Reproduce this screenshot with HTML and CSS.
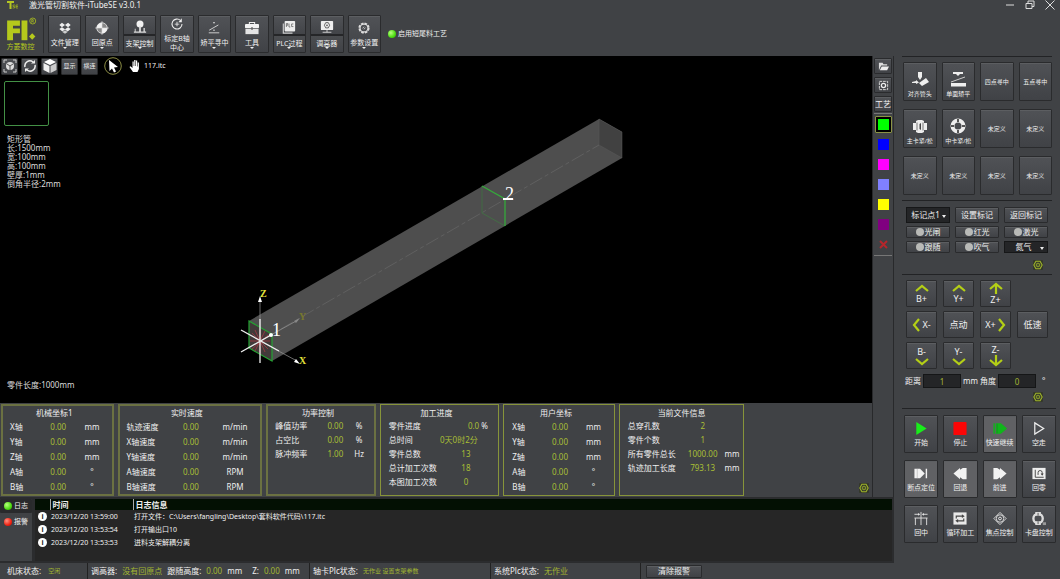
FILE: index.html
```html
<!DOCTYPE html>
<html lang="zh-CN">
<head>
<meta charset="utf-8">
<title>激光管切割软件-iTubeSE v3.0.1</title>
<link rel="stylesheet" href="styles.css">
</head>
<body>
<svg class="defs" aria-hidden="true">
  <symbol id="gear" viewBox="0 0 12 12"><path d="M3.5 1.5h5L11 6l-2.500 4.500h-5L1 6z" fill="none" stroke="currentColor" stroke-width="1.300"/><circle cx="6" cy="6" r="2.200" fill="none" stroke="currentColor"/><circle cx="6" cy="6" r=".7" fill="currentColor"/></symbol>
  <symbol id="up" viewBox="0 0 14 8"><path d="M1 7l6-5 6 5" fill="none" stroke="currentColor" stroke-width="2.200"/></symbol>
  <symbol id="down" viewBox="0 0 14 8"><path d="M1 1l6 5 6-5" fill="none" stroke="currentColor" stroke-width="2.200"/></symbol>
</svg>
<div class="app">
  <header class="header">
    <div class="titlebar">
      <svg class="app-icon" viewBox="0 0 11 10"><path d="M0 1h7v2H4.500v6h-2V3H0z" fill="#b5c722"/><path d="M8 5H6v1.500h1.500V8H5.500M11 5H9v3h2M9 6.500h2" fill="none" stroke="#9aac20" stroke-width=".8"/></svg>
      <h1 class="title">激光管切割软件-iTubeSE v3.0.1</h1>
      <div class="window-controls">
        <button aria-label="最小化"><svg viewBox="0 0 10 10"><path d="M1 5h8"/></svg></button>
        <button aria-label="还原"><svg viewBox="0 0 10 10"><path d="M1 3.500h6v5H1zM3 3.500V1h6v5.500H7"/></svg></button>
        <button aria-label="关闭"><svg viewBox="0 0 10 10"><path d="M.5.5l9 9M9.500.5l-9 9"/></svg></button>
      </div>
    </div>
    <div class="toolbar">
      <div class="brand">
        <svg viewBox="0 0 30 24"><path d="M2 4h12v5H7.500v2.500H14V16H7.500v6.500H2z" fill="#b5c91c"/><path d="M15.500 4H21v18.500h-5.500z" fill="#b5c91c"/><path d="M25.500 16l3 3-3 3-3-3z" fill="#b5c91c"/><circle cx="26" cy="4.500" r="2.800" fill="none" stroke="#b5c91c" stroke-width=".7"/><path d="M25.100 6.100V3h1.200q1 .8 0 1.600h-1.200m1 0l1 1.500" fill="none" stroke="#b5c91c" stroke-width=".6"/></svg>
        <span>方菱数控</span>
      </div>
      <nav class="tools">
        <button class="tool has-menu"><svg viewBox="0 0 16 16"><path d="M4.500 2L8 4.500 4.500 7 1.500 4.500zM11.500 2L8 4.500 11.500 7l3-2.500zM4.500 7L8 9.500 11.500 7l3 2.200L11 12 8 9.800 5 12 1.500 9.200z" fill="#eee"/><path d="M5 12.500l3-2 3 2-3 2z" fill="#ccc"/></svg><span>文件管理</span></button>
        <button class="tool has-menu"><svg viewBox="0 0 16 16"><circle cx="8" cy="8" r="6" fill="#888" stroke="#ddd"/><path d="M8 8V2A6 6 0 0 0 2 8zM8 8v6A6 6 0 0 0 14 8z" fill="#f2f2f2"/><path d="M8 0v16M0 8h16" stroke="#ddd" stroke-width=".7"/></svg><span>回原点</span></button>
        <button class="tool split has-menu"><svg viewBox="0 0 16 16"><circle cx="8" cy="4.500" r="4" fill="#f2f2f2"/><path d="M7 7h2v6H7zM1 13h14v1.500H1zM2 10h1v3H2zM12 9h1.500v4H12z" fill="#ddd"/></svg><span>支架控制</span></button>
        <button class="tool"><svg viewBox="0 0 16 16"><path d="M12 4a5.700 5.700 0 1 0 1.700 4" fill="none" stroke="#eee" stroke-width="1.200"/><path d="M13.500 1.500V6H9.500zM7.500 5.500h1V7.600h2.100v1H8.500v2.100h-1V8.600H5.400v-1h2.100z" fill="#eee"/></svg><span>标定B轴<br>中心</span></button>
        <button class="tool has-menu"><svg viewBox="0 0 16 16"><path d="M2 13.500h12M2.500 10.500L13 4.500" stroke="#ddd" fill="none"/><path d="M7 1h2L8 3.500zM7 11h2l-1-2z" fill="#eee"/></svg><span>矫平寻中</span></button>
        <button class="tool has-menu"><svg viewBox="0 0 16 16"><path d="M5 4V1.800h6V4" fill="none" stroke="#eee" stroke-width="1.200"/><rect x="0" y="3.500" width="16" height="4.500" rx="1" fill="#f2f2f2"/><path d="M.5 8.800h15V15H.5z" fill="#e4e4e4"/><path d="M7 7h2v3H7z" fill="#666"/></svg><span>工具</span></button>
        <button class="tool split has-menu"><svg viewBox="0 0 16 16"><path d="M1.500 4v11H12" fill="none" stroke="#ccc" stroke-width="1.300"/><rect x="3" y="1" width="12" height="12" rx="1" fill="#eee"/><path d="M5 8V4h1.500v2H5M8 4v4h1.500M13 4.500h-2v3h2" stroke="#555" fill="none" stroke-width=".8"/></svg><span>PLC过程</span></button>
        <button class="tool split has-menu"><svg viewBox="0 0 16 16"><rect x="1" y="1" width="14" height="10.500" rx="1" fill="#eee"/><path d="M6.500 3h3L11 6 9.500 9h-3L5 6z" fill="none" stroke="#555"/><circle cx="8" cy="6" r="1" fill="#555"/><path d="M8 11.500V14M3 14h10" stroke="#ddd"/></svg><span>调高器</span></button>
        <button class="tool has-menu"><svg viewBox="0 0 16 16"><circle cx="8" cy="8" r="5.500" fill="none" stroke="#ddd" stroke-width="1.800" stroke-dasharray="3 1.320"/><circle cx="8" cy="8" r="4.500" fill="none" stroke="#ddd" stroke-width="1.300"/><path d="M6.500 8.500L8 6.500M8 9.500l1.500-2" stroke="#ccc"/></svg><span>参数设置</span></button>
      </nav>
      <p class="process"><i class="led green"></i>启用短尾料工艺</p>
    </div>
  </header>

  <main class="workspace">
    <section class="stage">
      <div class="viewport">
        <svg class="scene" viewBox="0 56 872 347" preserveAspectRatio="xMidYMid slice" role="img" aria-label="矩形管三维视图">
          <path d="M249 321L599 119l23 13v26L272 361l-23-13z" fill="#4e4e4e"/>
          <path d="M599 119l23 13v26l-23-13z" fill="#414141" stroke="#5a5a5a" stroke-width=".5"/>
          <path d="M260 341L599 145" stroke="#6c6c6c" stroke-width=".6" stroke-dasharray="14 3 4 3"/>
          <path d="M482 186v27l23 13" fill="none" stroke="#3d7a40" stroke-width=".7"/>
          <path d="M482 186l23 13v27" fill="none" stroke="#35a83b" stroke-width="1.300"/>
          <path d="M249 321l23 13v27l-23-13z" fill="#413a3a" stroke="#24a232" stroke-width="1.200"/>
          <path d="M252 333l16 16M252 349l16-14M260 329v24M250 341h20M255 330l10 22M265 331l-10 20" stroke="#a33843" stroke-width=".8"/>
          <path d="M260 341v-39M260 341l37 20M260 341l38-21" stroke="#999" stroke-width=".7"/>
          <path d="M260 319v44M241 330l38 21M241 352l30-17" stroke="#eee" stroke-width="1.300"/>
          <path d="M258 302l2-6 2 6zM294 362l6 2-4-5z" fill="#fff"/>
          <path d="M294 321l6-3-4 5z" fill="#888"/>
          <circle cx="271" cy="335" r="2" fill="#fff"/><path d="M503 198h10v2h-10z" fill="#fff"/>
          <text x="260" y="297" class="axis">Z</text><text x="299" y="364" class="axis">X</text><text x="299" y="320" class="axis faint">Y</text>
          <text x="272" y="336" class="point">1</text><text x="505" y="200" class="point">2</text>
        </svg>
        <div class="view-tools">
          <button class="mini" aria-label="视图"><svg viewBox="0 0 14 14"><path d="M1 4V1h3M10 1h3v3M13 10v3h-3M4 13H1v-3" fill="none" stroke="#ccc"/><circle cx="7" cy="7" r="4" fill="#ddd"/><path d="M7 7v4M7 7L4 5M7 7l3-2" stroke="#555"/></svg></button>
          <button class="mini" aria-label="旋转"><svg viewBox="0 0 14 14"><path d="M2 8a5 5 0 0 1 8-5M12 6a5 5 0 0 1-8 5" fill="none" stroke="#eee" stroke-width="1.500"/><path d="M8 4.500h4V1zM6 9.500H2V13z" fill="#eee"/></svg></button>
          <button class="mini" aria-label="立体"><svg viewBox="0 0 14 14"><path d="M7 0l6 3-6 3-6-3z" fill="#fff"/><path d="M.5 4l6 3v7l-6-3z" fill="#eee"/><path d="M13.500 4l-6 3v7l6-3z" fill="#ccc"/></svg></button>
          <button class="mini">显示</button>
          <button class="mini">横连</button>
          <button class="pointer" aria-label="选择"><svg viewBox="0 0 18 18"><circle cx="9" cy="9" r="8.300" fill="none" stroke="#8c8d45"/><path d="M5 3l9 7-4 .5 2 4-2 1-2-4-2.500 2.500z" fill="#fff"/></svg></button>
          <button class="hand" aria-label="平移"><svg viewBox="0 0 12 14"><path d="M4 13L.5 8l1-.7L3.500 9V2.500h1.200V7h.5V1h1.300v6H7V1.500h1.200v6h.5V3.500h1.200V10L8.500 13z" fill="#fff"/></svg></button>
          <span>117.itc</span>
        </div>
        <div class="section-view"></div>
        <p class="dimensions">矩形管<br>长:1500mm<br>宽:100mm<br>高:100mm<br>壁厚:1mm<br>倒角半径:2mm</p>
        <p class="part-length">零件长度:1000mm</p>
      </div>
      <div class="readouts">
        <section class="readout axes thick"><h2>机械坐标1</h2><dl>
          <dt>X轴</dt><dd>0.00</dd><dd>mm</dd><dt>Y轴</dt><dd>0.00</dd><dd>mm</dd><dt>Z轴</dt><dd>0.00</dd><dd>mm</dd><dt>A轴</dt><dd>0.00</dd><dd>°</dd><dt>B轴</dt><dd>0.00</dd><dd>°</dd></dl></section>
        <section class="readout speed thick"><h2>实时速度</h2><dl>
          <dt>轨迹速度</dt><dd>0.00</dd><dd>m/min</dd><dt>X轴速度</dt><dd>0.00</dd><dd>m/min</dd><dt>Y轴速度</dt><dd>0.00</dd><dd>m/min</dd><dt>A轴速度</dt><dd>0.00</dd><dd>RPM</dd><dt>B轴速度</dt><dd>0.00</dd><dd>RPM</dd></dl></section>
        <section class="readout power thick tight"><h2>功率控制</h2><dl>
          <dt>峰值功率</dt><dd>0.00</dd><dd>%</dd><dt>占空比</dt><dd>0.00</dd><dd>%</dd><dt>脉冲频率</dt><dd>1.00</dd><dd>Hz</dd></dl></section>
        <section class="readout progress tight"><h2>加工进度</h2><dl>
          <dt>零件进度</dt><dd class="percent">0.0 <em>%</em></dd><dt>总时间</dt><dd class="wide">0天0时2分</dd><dt>零件总数</dt><dd>13</dd><dt>总计加工次数</dt><dd>18</dd><dt>本图加工次数</dt><dd>0</dd></dl></section>
        <section class="readout axes"><h2>用户坐标</h2><dl>
          <dt>X轴</dt><dd>0.00</dd><dd>mm</dd><dt>Y轴</dt><dd>0.00</dd><dd>mm</dd><dt>Z轴</dt><dd>0.00</dd><dd>mm</dd><dt>A轴</dt><dd>0.00</dd><dd>°</dd><dt>B轴</dt><dd>0.00</dd><dd>°</dd></dl></section>
        <section class="readout file tight"><h2>当前文件信息</h2><dl>
          <dt>总穿孔数</dt><dd>2</dd><dd></dd><dt>零件个数</dt><dd>1</dd><dd></dd><dt>所有零件总长</dt><dd>1000.00</dd><dd>mm</dd><dt>轨迹加工长度</dt><dd>793.13</dd><dd>mm</dd></dl></section>
        <button class="gear" aria-label="显示设置"><svg><use href="#gear"/></svg></button>
      </div>
    </section>

    <aside class="layers">
      <button class="layer-tool" aria-label="打开"><svg viewBox="0 0 12 12"><path d="M1 10V2h4l1 1.500h4V5H3.500z" fill="#ddd"/><path d="M4 6h8l-2 4H2z" fill="#eee"/></svg></button>
      <button class="layer-tool" aria-label="图层设置"><svg viewBox="0 0 12 12"><rect x="1.500" y="1.500" width="9" height="9" fill="none" stroke="#ddd" stroke-dasharray="3 1"/><circle cx="6" cy="6" r="2.300" fill="none" stroke="#eee" stroke-width="1.400"/></svg></button>
      <button class="layer-tool">工艺</button>
      <div class="swatches">
        <button class="swatch lime selected" aria-label="绿色图层"></button>
        <button class="swatch blue" aria-label="蓝色图层"></button>
        <button class="swatch magenta" aria-label="品红图层"></button>
        <button class="swatch lavender" aria-label="淡紫图层"></button>
        <button class="swatch yellow" aria-label="黄色图层"></button>
        <button class="swatch purple" aria-label="紫色图层"></button>
        <button class="swatch" aria-label="删除"><svg viewBox="0 0 11 11"><path d="M2 2l7 7M9 2L2 9" stroke="#b5262b" stroke-width="2"/></svg></button>
      </div>
    </aside>
  </main>

  <section class="log">
    <div class="log-tabs">
      <button class="active"><i class="led green"></i>日志</button>
      <button><i class="led red"></i>报警</button>
    </div>
    <div class="log-body">
      <table>
        <thead><tr><th class="icon-col"></th><th class="time-col">时间</th><th>日志信息</th></tr></thead>
        <tbody>
          <tr><td><i class="info">i</i></td><td>2023/12/20 13:59:00</td><td>打开文件：C:\Users\fangling\Desktop\套料软件代码\117.itc</td></tr>
          <tr><td><i class="info">i</i></td><td>2023/12/20 13:53:54</td><td>打开输出口10</td></tr>
          <tr><td><i class="info">i</i></td><td>2023/12/20 13:53:53</td><td>进料支架解耦分离</td></tr>
        </tbody>
      </table>
    </div>
  </section>

  <footer class="status">
    <div><span>机床状态:</span><b class="small">空闲</b></div>
    <div><span>调高器:</span><b>没有回原点</b><span>跟随高度:</span><b>0.00</b><span>mm</span><span class="z">Z:</span><b>0.00</b><span>mm</span></div>
    <div><span>轴卡Plc状态:</span><b class="small">无作业 设置支架参数</b></div>
    <div><span>系统Plc状态:</span><b>无作业</b></div>
    <div><button>清除报警</button></div>
  </footer>

  <aside class="controls">
    <section class="macros">
      <button><svg viewBox="0 0 18 16"><path d="M7 1h4v5L9 9 7 6zM1 11l4-1V9l3 2.500L5 13v-1H1zM8 12l7-5 3 4-7 4z" fill="#eee"/></svg>对齐管头</button>
      <button><svg viewBox="0 0 18 16"><path d="M4 1h10v2h-3l-2 2-2-2H4zM2 12h15v3.500H2z" fill="#eee"/><path d="M2 11l14-5" stroke="#ccc"/></svg>单面矫平</button>
      <button>四点寻中</button><button>五点寻中</button>
      <button><svg viewBox="0 0 18 16"><path d="M2 5h3V3l2-1h4l2 1v2h3v7h-3v2l-2 1H7l-2-1v-2H2z" fill="#eee"/><path d="M6 4.500v8M12 4.500v8" stroke="#777"/><path d="M8.500 6l1.500-1v7l-1.500-1z" fill="#444"/></svg>主卡紧/松</button>
      <button><svg viewBox="0 0 18 16"><circle cx="9" cy="8" r="5.500" fill="none" stroke="#eee" stroke-width="4"/><path d="M9 1v3M9 12v3M2 8h3M13 8h3" stroke="#555" stroke-width="2"/></svg>中卡紧/松</button>
      <button>未定义</button><button>未定义</button><button>未定义</button><button>未定义</button><button>未定义</button><button>未定义</button>
    </section>
    <section class="marks">
      <div class="mark-grid">
        <label class="picker"><select aria-label="标记点"><option>标记点1</option></select></label>
        <button>设置标记</button><button>返回标记</button>
        <button><i class="lamp"></i>光闸</button><button><i class="lamp"></i>红光</button><button><i class="lamp"></i>激光</button>
        <button><i class="lamp"></i>跟随</button><button><i class="lamp"></i>吹气</button>
        <label class="picker"><select aria-label="气体"><option>氮气</option></select></label>
      </div>
      <button class="gear" aria-label="标记设置"><svg><use href="#gear"/></svg></button>
    </section>
    <section class="jog">
      <div class="jog-grid">
        <button><svg class="v"><use href="#up"/></svg>B+</button>
        <button><svg class="v"><use href="#up"/></svg>Y+</button>
        <button class="axis-z"><svg class="a" viewBox="0 0 14 12"><path d="M1 7l6-5 6 5M7 2v10" fill="none" stroke="currentColor" stroke-width="2.200"/></svg>Z+</button>
        <i></i>
        <button class="row"><svg class="h" viewBox="0 0 8 14"><path d="M7 1L2 7l5 6" fill="none" stroke="currentColor" stroke-width="2.200"/></svg>X-</button>
        <button>点动</button>
        <button class="row">X+<svg class="h" viewBox="0 0 8 14"><path d="M1 1l5 6-5 6" fill="none" stroke="currentColor" stroke-width="2.200"/></svg></button>
        <button>低速</button>
        <button>B-<svg class="v"><use href="#down"/></svg></button>
        <button>Y-<svg class="v"><use href="#down"/></svg></button>
        <button class="axis-z">Z-<svg class="a" viewBox="0 0 14 12"><path d="M1 5l6 5 6-5M7 0v10" fill="none" stroke="currentColor" stroke-width="2.200"/></svg></button>
      </div>
      <div class="steps">
        <label for="distance">距离</label><input id="distance" value="1"><span>mm</span>
        <label for="angle">角度</label><input id="angle" value="0"><span class="degree">°</span>
      </div>
      <button class="gear" aria-label="点动设置"><svg><use href="#gear"/></svg></button>
    </section>
    <section class="run">
      <button><svg viewBox="0 0 16 16"><path d="M3 1l11 7-11 7z" fill="#19ed1b"/></svg>开始</button>
      <button><svg viewBox="0 0 16 16"><rect x="1" y="1" width="14" height="14" rx="1" fill="#fb0606"/></svg>停止</button>
      <button class="lit"><svg viewBox="0 0 16 16"><path d="M1 2.500h1.500v11H1zM3.500 2.500H9l6.500 5.500L9 13.500H3.500z" fill="#10b51b"/><path d="M5 3v10" stroke="#168822" stroke-width=".7"/></svg>快速继续</button>
      <button><svg viewBox="0 0 16 16"><path d="M3.500 2l9.500 6-9.500 6z" fill="none" stroke="#eee" stroke-width="1.300"/></svg>空走</button>
      <button class="lit"><svg viewBox="0 0 16 16"><path d="M1 3h6l5 5-5 5H1zM13 3h1.500v10H13z" fill="#f2f2f2"/><path d="M4 3v10" stroke="#aaa" stroke-width=".6"/></svg>断点定位</button>
      <button class="lit"><svg viewBox="0 0 16 16"><path d="M1 8l7-6v2l3-2h4v12h-4l-3-2v2z" fill="#f2f2f2"/></svg>回退</button>
      <button class="lit"><svg viewBox="0 0 16 16"><path d="M15 8L8 2v2L5 2H1v12h4l3-2v2z" fill="#f2f2f2"/></svg>前进</button>
      <button><svg viewBox="0 0 16 16"><rect x="1" y="2" width="14" height="12" fill="#eee"/><path d="M4 4v8h9M7 9.500V7a2.200 2.200 0 0 1 4.400 0v2.500" fill="none" stroke="#444"/><path d="M9.800 8h3.200l-1.600 2.500z" fill="#444"/></svg>回零</button>
      <button><svg viewBox="0 0 16 16"><path d="M8 1v14M1 7.500h14M2 7.500V15M14 7.500V15M1 3.500h5M10 3.500h5" fill="none" stroke="#ddd"/><path d="M5 2l2 1.500L5 5zM11 2L9 3.500 11 5z" fill="#eee"/></svg>回中</button>
      <button><svg viewBox="0 0 16 16"><rect x="1" y="1.500" width="14" height="13" fill="#e8e8e8"/><path d="M4 8V5.500h7M12 8v2.500H5" fill="none" stroke="#444" stroke-width="1.200"/><path d="M10 3.500l3 2-3 2zM6 8.500l-3 2 3 2z" fill="#444"/></svg>循环加工</button>
      <button><svg viewBox="0 0 16 16"><path d="M8 1.500L14.500 8 8 14.500 1.500 8z" fill="none" stroke="#ddd"/><circle cx="8" cy="8" r="4" fill="none" stroke="#ddd"/><circle cx="8" cy="8" r="1.500" fill="none" stroke="#eee"/></svg>焦点控制</button>
      <button><svg viewBox="0 0 16 16"><circle cx="7" cy="8" r="5" fill="none" stroke="#ddd" stroke-width="2.500"/><path d="M4 1h6v4H4zM4 11h6v4H4z" fill="#ddd"/><path d="M7 2v3M7 11v3" stroke="#555"/><path d="M12 12h3.500v3H12z" fill="#999"/></svg>卡盘控制</button>
    </section>
  </aside>
</div>
</body>
</html>
```
FILE: styles.css
```css
* { box-sizing: border-box; }
body {
  margin: 0;
  background: #404245;
  color: #f0f0f0;
  font: 8px/10px "Noto Sans", "Noto Sans CJK SC", sans-serif;
}
h1, h2, p, dl, dd { margin: 0; font-size: inherit; font-weight: normal; }
i, em { font-style: normal; }
button, input, select { font: inherit; color: inherit; margin: 0; padding: 0; }
button {
  display: flex;
  align-items: center;
  justify-content: center;
  white-space: nowrap;
  border: 1px solid #2a2b2d;
  border-radius: 1px;
  background: linear-gradient(#505256, #404246);
  box-shadow: inset 0 1px #5c5e61;
}
.defs { position: absolute; width: 0; height: 0; }

.app {
  display: grid;
  grid-template-columns: minmax(0, 1fr) 166px;
  grid-template-rows: auto minmax(0, 1fr) auto auto;
  min-height: 100vh;
}

/* header */
.header { grid-column: 1 / -1; height: 56px; }
.titlebar { display: flex; align-items: center; height: 12px; padding: 0 5px 2px 7px; }
.app-icon { width: 11px; height: 10px; margin-right: 11px; }
.window-controls { display: flex; gap: 10px; margin-left: auto; }
.window-controls button { border: 0; background: none; box-shadow: none; }
.window-controls svg { width: 10px; height: 10px; fill: none; stroke: #ddd; }
.toolbar { display: flex; align-items: stretch; height: 44px; padding: 3px 0; }
.brand {
  display: flex;
  flex-direction: column;
  align-items: center;
  width: 44px;
  padding: 1px 2px 0 0;
  margin-right: 4px;
  border-right: 1px solid #2c2d2f;
  color: #b5c91c;
  font: 7px/8px "Noto Sans CJK SC", sans-serif;
}
.brand svg { width: 32px; height: 26px; }
.tools { display: grid; grid-template-columns: repeat(9, 1fr); gap: 4px; width: 333px; }
.tool { position: relative; flex-direction: column; gap: 3px; padding: 0; font-size: 7px; line-height: 9px; }
.tool svg { width: 16px; height: 14px; flex: none; }
.tool span { text-align: center; }
.has-menu::after {
  position: absolute;
  bottom: 3px;
  border: 2px solid transparent;
  border-top-color: #eee;
  border-bottom: 0;
  content: "";
}
.split { background: linear-gradient(#505256, #424448 18px, #252628 18px, #252628 20px, #4b4d50 20px, #404246); }
.split svg { margin-bottom: 2px; }
.process { display: flex; align-items: center; gap: 2px; margin-left: 7px; font-size: 7px; }
.led { flex: none; width: 8px; height: 8px; border-radius: 50%; }
.led.green { background: radial-gradient(circle at 35% 35%, #b8ff80, #4bdc10 60%, #2e9a08); }
.led.red { background: radial-gradient(circle at 35% 35%, #ff9080, #f02010 60%, #a01008); }

/* workspace */
.workspace { display: flex; min-width: 0; }
.stage { display: flex; flex: 1; flex-direction: column; min-width: 0; }
.viewport {
  position: relative;
  display: flex;
  flex: 1;
  flex-direction: column;
  padding: 1px 0 13px;
  background: #000;
}
.scene { position: absolute; inset: 0; width: 100%; height: 100%; }
.axis { fill: #e4e43c; font: bold 10px "Liberation Serif", serif; }
.axis.faint { fill: #77772d; }
.point { fill: #fff; font: 18px "Liberation Serif", serif; }
.view-tools { position: relative; display: flex; align-items: center; gap: 3px; padding-left: 1px; font-size: 7px; }
.mini { width: 17px; height: 17px; font-size: 6px; }
.mini svg { width: 14px; height: 14px; }
.pointer, .hand { border: 0; background: none; box-shadow: none; }
.pointer { margin-left: 3px; }
.pointer svg { width: 18px; height: 18px; }
.hand { margin-left: 4px; }
.hand svg { width: 12px; height: 14px; }
.section-view { position: relative; width: 45px; height: 45px; margin: 6px 0 0 4px; border: 1px solid #439045; border-radius: 2px; }
.dimensions, .part-length { position: relative; padding-left: 7px; color: #dcdcdc; }
.dimensions { margin-top: 8px; line-height: 9px; }
.part-length { margin-top: auto; }

.readouts {
  display: grid;
  grid-template-columns: 112fr 144fr 109fr 119fr 111fr 125fr 120fr;
  gap: 4px;
  padding: 1px 3px 1px 1px;
}
.readout { padding: 2px 6px 1px 8px; border: 1px solid #87943a; }
.readout.thick { border: 2px solid #6b7142; padding: 1px 5px 0 7px; }
.readout h2 { line-height: 12px; text-align: center; margin-right: 8px; }
.readout dl { display: grid; line-height: 15px; min-height: 75px; align-content: start; white-space: nowrap; }
.readout dd { color: #a9bf35; text-align: center; }
.axes dl { grid-template-columns: 3fr 4fr 3fr; }
.speed dl { grid-template-columns: 48fr 32fr 48fr; }
.power dl { grid-template-columns: 48fr 30fr 20fr; }
.progress dl { grid-template-columns: 52fr 54fr; }
.file dl { grid-template-columns: 60fr 38fr 24fr; }
.file { padding-right: 0; }
.tight dl { line-height: 14px; }
.axes dd:nth-child(3n), .speed dd:nth-child(3n), .power dd:nth-child(3n), .file dd:nth-child(3n), .percent em { color: #eee; }
.speed dd:nth-child(3n) { text-align: center; padding-left: 8px; }
.percent { padding-left: 24px; }
.wide { padding-right: 14px; }
.gear { width: 10px; height: 10px; border: 0; background: #34382b; box-shadow: none; color: #a0b52a; }
.gear svg { width: 10px; height: 10px; }
.readouts .gear { align-self: end; justify-self: end; margin-bottom: 3px; }

.layers { width: 22px; padding: 2px 1px 0; border-left: 1px solid #28292b; border-right: 1px solid #28292b; }
.layer-tool { width: 100%; height: 16px; margin-bottom: 3px; }
.layer-tool:last-of-type { margin-bottom: 1px; }
.layer-tool svg { width: 11px; height: 11px; }
.swatches { display: grid; justify-items: center; gap: 3px; padding: 2px 0; border-top: 1px solid #777; border-bottom: 1px solid #777; }
.swatch { width: 17px; height: 17px; padding: 3px; border: 1px solid transparent; background: none; box-shadow: none; }
.swatch::before { width: 11px; height: 11px; flex: none; background: currentColor; content: ""; }
.swatch:last-child::before { display: none; }
.swatch svg { width: 11px; height: 11px; flex: none; }
.swatch.selected { border-color: #8b9344; background: #000; }
.lime { color: #0f0; }
.blue { color: #00f; }
.magenta { color: #f0f; }
.lavender { color: #8080ff; }
.yellow { color: #ff0; }
.purple { color: #800080; }

/* log */
.log { display: flex; padding: 2px 2px 2px 0; background: #2b2c2e; }
.log-tabs { width: 32px; background: #404245; }
.log-tabs button { width: 100%; height: 18px; gap: 2px; border: 0; background: none; box-shadow: none; font-size: 7px; }
.log-tabs .active { height: 14px; background: #292a2c; }
.log-body { flex: 1; min-width: 0; min-height: 62px; margin-left: 3px; background: #262626; }
.log table { width: 100%; border-collapse: collapse; table-layout: fixed; font-size: 7px; }
.log thead { background: #031003; }
.log th { padding: 0 0 0 2px; border-left: 1px solid #aaa; font-size: 8px; line-height: 11px; text-align: left; }
.log .icon-col { width: 15px; border: 0; }
.log .time-col { width: 83px; }
.log td { height: 13px; padding: 0 0 0 1px; line-height: 12px; }
.log td:first-child { padding-left: 3px; }
.info { display: block; width: 9px; height: 9px; border-radius: 50%; background: #fff; color: #222; font-weight: bold; line-height: 9px; text-align: center; }

/* status */
.status { display: grid; grid-column: 1; grid-template-columns: 87fr 222fr 181fr 150fr 254fr; height: 16px; white-space: nowrap; }
.status div { display: flex; align-items: center; gap: 5px; padding-left: 3px; border-left: 1px solid #222; }
.status div:first-child { padding-left: 7px; border: 0; gap: 7px; }
.status b { color: #a1b631; font-weight: normal; }
.status .small { font-size: 6px; }
.status .z { margin-left: 5px; }
.status button { width: 56px; height: 13px; margin-left: 2px; }

/* control panel */
.controls { display: flex; grid-column: 2; grid-row: 2 / 5; flex-direction: column; padding: 0 8px; }
.controls section { border-top: 1px solid #222325; }
.macros { display: grid; grid-template-columns: repeat(4, 1fr); grid-auto-rows: 39px; gap: 8px 5px; padding: 5px 0 5px 1px; font-size: 6px; line-height: 8px; }
.macros button { flex-direction: column; gap: 3px; }
.macros svg { width: 18px; height: 16px; margin-top: 6px; }
.marks { padding: 6px 4px 4px; }
.mark-grid { display: grid; grid-template-columns: repeat(3, 1fr); grid-template-rows: 16px 12px 12px; gap: 3px 5px; }
.mark-grid button { gap: 1px; }
.lamp { width: 8px; height: 8px; border-radius: 50%; background: #b9bab7; }
.picker { position: relative; display: flex; }
.picker::after { position: absolute; top: 50%; right: 4px; border: 2px solid transparent; border-top: 3px solid #eee; border-bottom: 0; content: ""; }
.picker select { width: 100%; padding: 0 8px 0 3px; border: 1px solid #161718; border-radius: 0; background: #242527; appearance: none; text-align: center; }
.marks .gear, .jog .gear { margin: 7px 5px 0 auto; }
.jog { padding: 5px 4px 6px; }
.jog-grid { display: grid; grid-template-columns: repeat(4, 1fr); grid-auto-rows: 27px; gap: 4px 6px; font-size: 9px; line-height: 11px; }
.jog-grid button { flex-direction: column; gap: 1px; }
.jog-grid .row { flex-direction: row; gap: 2px; }
.jog-grid .axis-z { gap: 0; }
.jog-grid svg { color: #b4cf16; flex: none; }
.v { width: 14px; height: 8px; }
.a { width: 14px; height: 12px; }
.h { width: 8px; height: 14px; }
.steps { display: flex; align-items: center; gap: 2px; margin: 5px -4px 0 -1px; white-space: nowrap; }
.steps input { width: 38px; height: 14px; border: 1px solid #151617; background: #242527; color: #a5b734; text-align: center; }
.degree { margin-left: 4px; }
.jog .gear { margin-top: 4px; }
.run { display: grid; grid-template-columns: repeat(4, 1fr); grid-auto-rows: 38px; gap: 7px 5px; margin-right: -4px; padding: 6px 0 0 2px; font-size: 7px; line-height: 9px; }
.run button { flex-direction: column; gap: 2px; }
.run svg { width: 16px; height: 15px; }
.run .lit { background: #606164; }
```
